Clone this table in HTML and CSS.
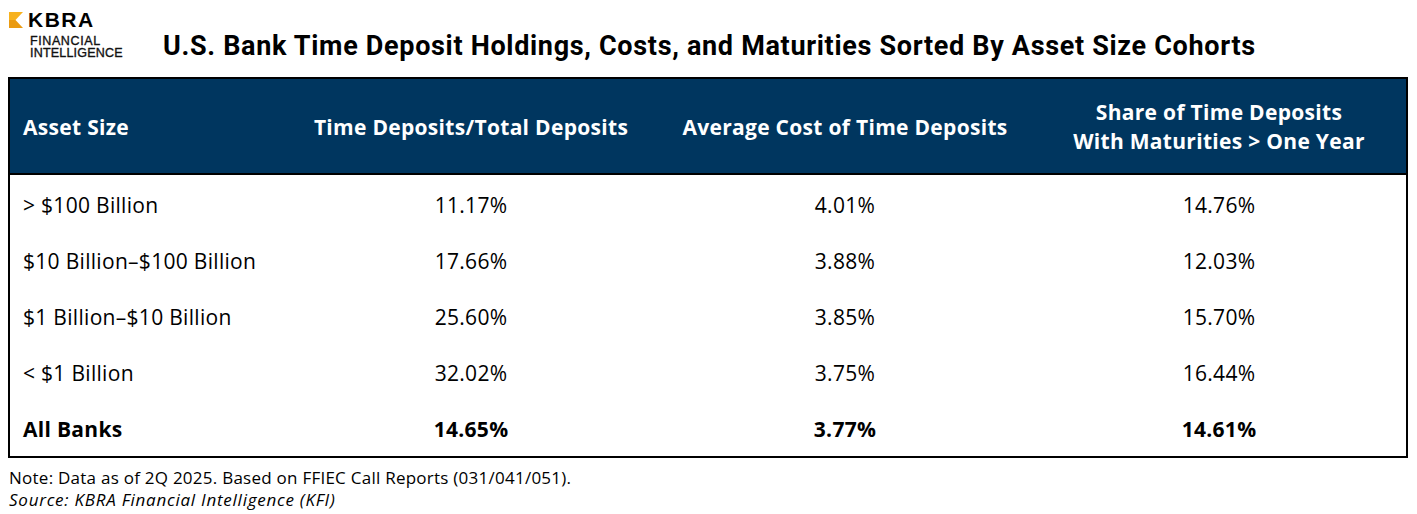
FILE: index.html
```html
<!DOCTYPE html>
<html>
<head>
<meta charset="utf-8">
<link rel="stylesheet" href="styles.css">
</head>
<body>
<div class="page">
  <header class="top">
    <div class="logo">
      <div class="logo-row">
        <svg class="mark" width="15" height="16" viewBox="0 0 15 16">
          <polygon points="0,0 14,0 6.5,8 0,8" fill="#F7B21E"/>
          <polygon points="0,8 6.5,8 14,16 0,16" fill="#EA9B12"/>
        </svg>
        <span class="kbra">KBRA</span>
      </div>
      <div class="fi"><span class="fi-1">FINANCIAL</span><br><span class="fi-2">INTELLIGENCE</span></div>
    </div>
    <h1 class="title">U.S. Bank Time Deposit Holdings, Costs, and Maturities Sorted By Asset Size Cohorts</h1>
  </header>
  <table class="data">
    <colgroup>
      <col class="w1"><col class="w2"><col class="w2"><col class="w2">
    </colgroup>
    <thead>
      <tr>
        <th class="c1">Asset Size</th>
        <th>Time Deposits/Total Deposits</th>
        <th>Average Cost of Time Deposits</th>
        <th>Share of Time Deposits<br>With Maturities &gt; One Year</th>
      </tr>
    </thead>
    <tbody>
      <tr><td class="c1">&gt; $100 Billion</td><td>11.17%</td><td>4.01%</td><td>14.76%</td></tr>
      <tr><td class="c1">$10 Billion–$100 Billion</td><td>17.66%</td><td>3.88%</td><td>12.03%</td></tr>
      <tr><td class="c1">$1 Billion–$10 Billion</td><td>25.60%</td><td>3.85%</td><td>15.70%</td></tr>
      <tr><td class="c1">&lt; $1 Billion</td><td>32.02%</td><td>3.75%</td><td>16.44%</td></tr>
      <tr class="total"><td class="c1">All Banks</td><td>14.65%</td><td>3.77%</td><td>14.61%</td></tr>
    </tbody>
  </table>
  <div class="notes">
    <p class="note">Note: Data as of 2Q 2025. Based on FFIEC Call Reports (031/041/051).</p>
    <p class="src">Source: KBRA Financial Intelligence (KFI)</p>
  </div>
</div>
</body>
</html>
```

FILE: styles.css
```css
html, body {
  margin: 0;
  padding: 0;
  background: #ffffff;
}
.page {
  padding: 0 9px 0 8px;
  font-family: "Open Sans", "Liberation Sans", sans-serif;
  color: #000;
}
.top {
  display: flex;
  align-items: flex-start;
  height: 77px;
}
.logo {
  padding: 11px 0 0 1px;
  width: 152px;
  flex: none;
}
.logo-row {
  display: flex;
  align-items: center;
  gap: 4px;
}
.mark {
  display: block;
}
.kbra {
  font-family: "Liberation Sans", Arial, sans-serif;
  font-weight: 700;
  font-size: 21px;
  line-height: 17px;
  letter-spacing: 1.5px;
}
.fi {
  margin: 7px 0 0 21px;
  font-family: "Liberation Sans", Arial, sans-serif;
  font-size: 12.5px;
  line-height: 12px;
  color: #111;
  -webkit-text-stroke: 0.35px #111;
}
.fi-1 {
  letter-spacing: 0.6px;
}
.fi-2 {
  letter-spacing: 0.2px;
}
.title {
  margin: 31px 0 0 2px;
  font-family: Roboto, sans-serif;
  font-weight: 700;
  font-size: 27px;
  line-height: 30px;
  letter-spacing: 0.68px;
  white-space: nowrap;
}
.data {
  box-sizing: border-box;
  width: 1400px;
  border-collapse: separate;
  border-spacing: 0;
  border: 2px solid #000;
  table-layout: fixed;
}
.w1 { width: 274px; }
.w2 { width: 374px; }
.data th {
  background: #00365F;
  color: #fff;
  font-family: "Open Sans", sans-serif;
  font-weight: 700;
  font-size: 21px;
  letter-spacing: 0.3px;
  line-height: 29px;
  height: 96px;
  padding: 2px 0 0;
  text-align: center;
  border-bottom: 2px solid #000;
  box-sizing: border-box;
}
.data .c1 {
  text-align: left;
  padding-left: 13px;
}
.data td {
  box-sizing: border-box;
  height: 56px;
  padding: 2px 0 0;
  text-align: center;
  font-size: 21px;
  letter-spacing: 0.3px;
  line-height: 24px;
}
.data tbody tr:first-child td {
  height: 57px;
  padding-top: 3px;
}
.total td {
  font-weight: 700;
}
.notes {
  padding: 9px 0 0 1px;
  font-size: 17px;
  line-height: 22px;
}
.notes p {
  margin: 0;
}
.note {
  letter-spacing: 0.25px;
}
.src {
  font-style: italic;
  letter-spacing: 0.75px;
}
```
